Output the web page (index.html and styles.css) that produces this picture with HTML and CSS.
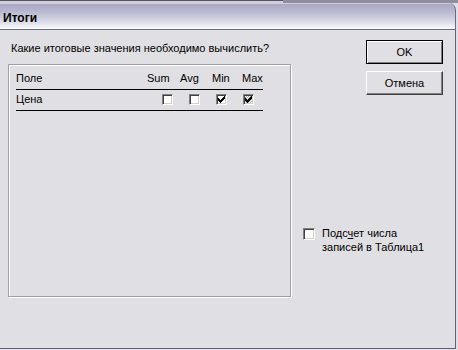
FILE: index.html
```html
<!DOCTYPE html>
<html lang="ru">
<head>
<meta charset="utf-8">
<title>Итоги</title>
<link rel="stylesheet" href="styles.css">
</head>
<body>
<div class="screen">
  <div class="behind"><span class="behind-a"></span><span class="behind-b"></span></div>
  <div class="window">
    <div class="titlebar"><span class="title">Итоги</span></div>
    <div class="body">
      <div class="left">
        <div class="prompt">Какие итоговые значения необходимо вычислить?</div>
        <div class="group">
          <div class="table">
            <div class="row head">
              <span class="name">Поле</span>
              <span>Sum</span>
              <span>Avg</span>
              <span>Min</span>
              <span>Max</span>
            </div>
            <div class="row data">
              <span class="name">Цена</span>
              <span class="boxes">
                <span class="cb"></span>
                <span class="cb"></span>
                <span class="cb"><svg class="check" width="7" height="7" viewBox="0 0 7 7"><path d="M6 0h1v1h-1z M5 1h2v1h-2z M0 2h1v1h-1z M4 2h3v1h-3z M0 3h2v1h-2z M3 3h3v1h-3z M0 4h5v1h-5z M1 5h3v1h-3z M2 6h1v1h-1z"/></svg></span>
                <span class="cb dither"><svg class="check" width="7" height="7" viewBox="0 0 7 7"><path d="M6 0h1v1h-1z M5 1h2v1h-2z M0 2h1v1h-1z M4 2h3v1h-3z M0 3h2v1h-2z M3 3h3v1h-3z M0 4h5v1h-5z M1 5h3v1h-3z M2 6h1v1h-1z"/></svg></span>
              </span>
            </div>
          </div>
        </div>
      </div>
      <div class="right">
        <div class="buttons">
          <button class="btn default">OK</button>
          <button class="btn">Отмена</button>
        </div>
        <div class="count">
          <span class="cb cb-lg"></span>
          <span class="count-text">Подс<u>ч</u>ет числа<br>записей в Таблица1</span>
        </div>
      </div>
    </div>
  </div>
</div>
</body>
</html>
```

FILE: styles.css
```css
html, body {
  margin: 0;
  padding: 0;
}
body {
  background: #e0dfe3;
  font-family: "Liberation Sans", Arial, sans-serif;
  font-size: 11px;
  color: #000;
  width: 458px;
  height: 350px;
  overflow: hidden;
}
.screen {
  display: flex;
  flex-direction: column;
  width: 458px;
  height: 350px;
}
.behind {
  display: flex;
  height: 3px;
}
.behind-a {
  width: 283px;
  box-sizing: border-box;
  background: #cfcfd8;
  border-top: 1px solid #55556a;
}
.behind-b {
  flex: 1;
  background: #8e8e9e;
}
.window {
  width: 456px;
  display: flex;
  flex-direction: column;
}
.titlebar {
  height: 27px;
  box-sizing: border-box;
  border-bottom: 1px solid #6a6a84;
  border-right: 1px solid #6a6a84;
  border-top-right-radius: 7px;
  background: linear-gradient(to bottom, #f4f4f8 0, #a9a9c3 1px, #b6b6ce 30%, #d4d4e2 65%, #eeeef4 90%, #ffffff 100%);
  padding: 8px 0 0 3px;
}
.title {
  display: block;
  font-weight: bold;
  font-size: 12px;
  line-height: 14px;
}
.body {
  height: 319px;
  box-sizing: border-box;
  border-right: 1px solid #62627e;
  border-bottom: 1px solid #62627e;
  display: flex;
}
.left {
  width: 283px;
  padding-left: 8px;
  display: flex;
  flex-direction: column;
}
.prompt {
  margin: 12px 0 0 3px;
  line-height: 13px;
}
.group {
  margin-top: 9px;
  height: 233px;
  box-sizing: border-box;
  border: 1px solid #a0a0a8;
  box-shadow: inset 1px 1px #fff, 1px 1px #fff;
  padding: 7px 0 0 7px;
}
.table {
  width: 247px;
}
.row {
  border-bottom: 1px solid #000;
}
.head {
  display: grid;
  grid-template-columns: 131px 33px 32px 30px 1fr;
  line-height: 13px;
  padding-bottom: 4px;
}
.data {
  display: flex;
  align-items: flex-start;
  height: 20px;
}
.data .name {
  flex: 1;
  padding-top: 3px;
  line-height: 13px;
}
.boxes {
  display: flex;
  gap: 16px;
  padding: 4px 9px 0 0;
}
.cb {
  width: 11px;
  height: 11px;
  box-sizing: border-box;
  flex: none;
  border: 1px solid;
  border-color: #808080 #ffffff #ffffff #808080;
  box-shadow: inset 1px 1px #404040, inset -1px -1px #d4d0c8;
  background: #fff;
  display: flex;
  align-items: center;
  justify-content: center;
}
.cb-lg {
  width: 12px;
  height: 12px;
}
.cb.dither {
  background: repeating-conic-gradient(#b0b0b0 0 25%, #ffffff 0 50%) 0 0 / 2px 2px;
}
.check {
  display: block;
  shape-rendering: crispEdges;
}
.check path {
  fill: #000;
}
.right {
  flex: 1;
  display: flex;
  flex-direction: column;
  padding-right: 12px;
}
.buttons {
  align-self: flex-end;
  margin-top: 10px;
  display: flex;
  flex-direction: column;
  gap: 7px;
}
.btn {
  width: 77px;
  height: 24px;
  box-sizing: border-box;
  margin: 0;
  padding: 0;
  font-family: "Liberation Sans", Arial, sans-serif;
  font-size: 11px;
  color: #000;
  background: #e0dfe3;
  border: 1px solid;
  border-color: #ffffff #404040 #404040 #ffffff;
  box-shadow: inset -1px -1px #808080;
  border-radius: 0;
}
.btn.default {
  border-color: #000;
  box-shadow: inset 1px 1px #fff, inset -1px -1px #808080;
}
.count {
  display: flex;
  align-items: flex-start;
  margin: 131px 0 0 12px;
}
.count .cb {
  margin-top: 2px;
}
.count-text {
  margin-left: 7px;
  line-height: 14px;
}
```
